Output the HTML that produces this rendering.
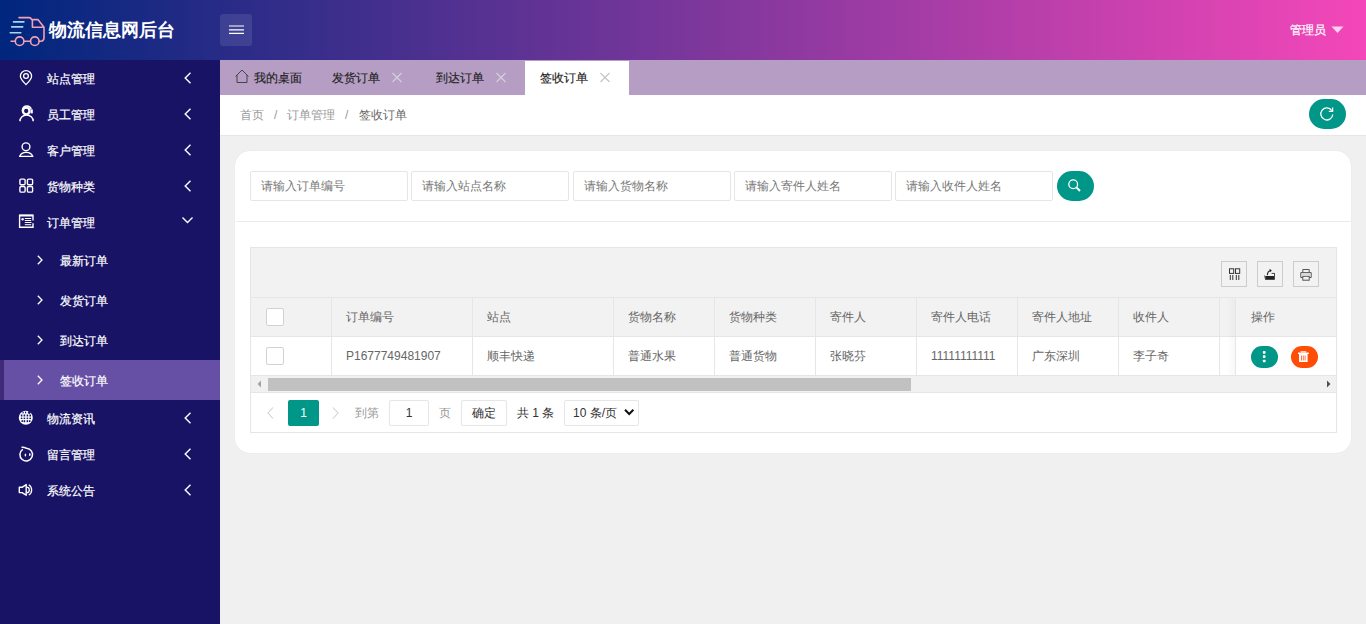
<!DOCTYPE html>
<html><head><meta charset="utf-8">
<style>
*{box-sizing:border-box;margin:0;padding:0}
html,body{width:1366px;height:624px;overflow:hidden;font-family:"Liberation Sans",sans-serif;font-size:12px;color:#666;background:#f0f0f0}
.abs{position:absolute}
#hdr{position:absolute;left:0;top:0;width:1366px;height:60px;background:linear-gradient(to right,#00267d,#f447b9)}
#title{position:absolute;left:49px;top:17px;font-size:18px;font-weight:bold;color:#fff;line-height:26px;white-space:nowrap}
#ham{position:absolute;left:220px;top:14px;width:32px;height:32px;border-radius:3px;background:rgba(255,255,255,.1)}
#admin{position:absolute;left:1290px;top:21px;color:#fff;line-height:18px;white-space:nowrap;-webkit-text-stroke:0.2px #fff}
#side{position:absolute;left:0;top:60px;width:220px;height:564px;background:#191366}
.it{position:absolute;left:0;width:220px;height:36px;line-height:36px;color:#fff}
.it .tx{position:absolute;left:47px;top:1px;-webkit-text-stroke:0.2px #fff}
.it svg{position:absolute}
.sub{height:40px;line-height:40px}
.sub .tx{left:60px}
.on{background:#6650a6}
.on:before{content:"";position:absolute;left:0;top:0;width:4px;height:40px;background:#3d2a78}
#tabs{position:absolute;left:220px;top:60px;width:1146px;height:35px;background:#b59dc4}
.tab{position:absolute;top:61px;height:35px;line-height:35px;color:#222;white-space:nowrap;-webkit-text-stroke:0.15px #222}
#crumb{position:absolute;left:220px;top:95px;width:1146px;height:41px;background:#fff;border-bottom:1px solid #e6e6e6}
#card{position:absolute;left:235px;top:151px;width:1116px;height:302px;background:#fff;border-radius:15px;box-shadow:0 0 1.5px rgba(0,0,0,.07)}
.inp{position:absolute;top:171px;width:158px;height:30px;border:1px solid #e6e6e6;border-radius:2px;background:#fff;color:#777;line-height:28px;padding-left:10px;white-space:nowrap}
.btn{position:absolute;background:#009688;border-radius:15px}
#tbl{position:absolute;left:250px;top:247px;width:1087px;height:186px;border:1px solid #e6e6e6;background:#fff}
.tool{position:absolute;top:261px;width:26px;height:26px;border:1px solid #ccc}
.th,.td{position:absolute;margin-top:1px;height:39px;line-height:39px;white-space:nowrap;color:#666}
.vl{position:absolute;width:1px;background:#e6e6e6}
.hl{position:absolute;height:1px;background:#e6e6e6}
.cb{position:absolute;width:18px;height:18px;border:1px solid #d2d2d2;border-radius:2px;background:#fff}
</style></head><body>
<div id="hdr"></div>
<svg class="abs" style="left:0;top:0" width="50" height="60" viewBox="0 0 50 60">
 <g fill="none" stroke-width="1.6" stroke-linecap="round" stroke-linejoin="round">
  <path d="M13.5 21.9H23.9M11.7 26.9H22.7M10.2 32.7H20.8" stroke="#a8d4ef"/>
  <path d="M19 17.6H29.4Q30.6 17.6 31.8 19.6H37.9L44 27.2V37.6Q44 41.2 40.9 41.2H39.1M30.5 41.2H23.9M15.3 41.2H11.1M32.4 19.6V27.2H44" stroke="#f4a0b4"/>
  <circle cx="19.6" cy="41.2" r="4.3" stroke="#f4a0b4"/>
  <circle cx="34.8" cy="41.2" r="4.3" stroke="#f4a0b4"/>
 </g>
</svg>
<div id="title">物流信息网后台</div>
<div id="ham"></div>
<svg class="abs" style="left:228px;top:24px" width="17" height="12" viewBox="0 0 17 12">
 <g stroke="#fff" stroke-width="1.2"><path d="M1 2H16M1 5.8H16M1 9.4H16"/></g>
</svg>
<div id="admin">管理员</div>
<svg class="abs" style="left:1331px;top:26px" width="13" height="8" viewBox="0 0 13 8"><path d="M0.5 0.5H12.5L6.5 7z" fill="rgba(255,255,255,.75)"/></svg>

<div id="side"></div>
<div class="it" style="top:60px"><svg class="abs" style="left:0;top:0" width="40" height="40" viewBox="0 0 40 40"><path d="M26 84.6Q20.4 79 20.4 76.2A5.6 5.6 0 0 1 31.6 76.2Q31.6 79 26 84.6Z" transform="translate(0,-60)" stroke="#fff" fill="none" stroke-width="1.3"/><circle cx="26" cy="16" r="2.4" stroke="#fff" fill="none" stroke-width="1.3"/></svg><svg class="abs" style="left:170px;top:0" width="40" height="36" viewBox="0 0 40 36"><path d="M20.5 12.8L15.2 18L20.5 23.2" stroke="#fff" fill="none" stroke-width="1.4"/></svg><span class="tx">站点管理</span></div>
<div class="it" style="top:96px"><svg class="abs" style="left:0;top:0" width="40" height="40" viewBox="0 0 40 40"><circle cx="26.2" cy="15" r="3.3" stroke="#fff" fill="none" stroke-width="2.3"/><path d="M22.5 15.5V13.5A4.5 4.5 0 0 1 31.2 13.2" stroke="#fff" fill="none" stroke-width="1.4"/><rect x="30.6" y="13.4" width="2.2" height="4" fill="#fff"/><path d="M20 25.2A6.6 6.2 0 0 1 33.2 25.2" stroke="#fff" fill="none" stroke-width="1.5"/></svg><svg class="abs" style="left:170px;top:0" width="40" height="36" viewBox="0 0 40 36"><path d="M20.5 12.8L15.2 18L20.5 23.2" stroke="#fff" fill="none" stroke-width="1.4"/></svg><span class="tx">员工管理</span></div>
<div class="it" style="top:132px"><svg class="abs" style="left:0;top:0" width="40" height="40" viewBox="0 0 40 40"><circle cx="26" cy="14.8" r="3.9" stroke="#fff" fill="none" stroke-width="1.4"/><path d="M19.6 24.4A7 6 0 0 1 32.8 24.4Z" stroke="#fff" fill="none" stroke-width="1.4" stroke-linejoin="round"/></svg><svg class="abs" style="left:170px;top:0" width="40" height="36" viewBox="0 0 40 36"><path d="M20.5 12.8L15.2 18L20.5 23.2" stroke="#fff" fill="none" stroke-width="1.4"/></svg><span class="tx">客户管理</span></div>
<div class="it" style="top:168px"><svg class="abs" style="left:0;top:0" width="40" height="40" viewBox="0 0 40 40"><g stroke="#fff" fill="none" stroke-width="1.4"><rect x="19.9" y="11.1" width="5.2" height="5.6" rx="1.2"/><rect x="27.4" y="11.1" width="5.2" height="5.6" rx="1.2"/><rect x="19.9" y="18.5" width="5.2" height="5.6" rx="1.2"/><rect x="27.4" y="18.5" width="5.2" height="5.6" rx="1.2"/></g></svg><svg class="abs" style="left:170px;top:0" width="40" height="36" viewBox="0 0 40 36"><path d="M20.5 12.8L15.2 18L20.5 23.2" stroke="#fff" fill="none" stroke-width="1.4"/></svg><span class="tx">货物种类</span></div>
<div class="it" style="top:204px"><svg class="abs" style="left:0;top:0" width="40" height="40" viewBox="0 0 40 40"><path d="M33 16.5V11.2H19.6V23.3H33V19.2" stroke="#fff" fill="none" stroke-width="1.4"/><path d="M19.6 11.6H33" stroke="#fff" stroke-width="1.8"/><circle cx="22.6" cy="15.2" r="1.2" fill="#fff"/><g stroke="#fff" stroke-width="1"><path d="M24.8 14.5H31.2M24.8 16.5H31.2M24.8 18.5H31.5M24.8 20.7H31.2"/></g></svg><svg class="abs" style="left:170px;top:0" width="40" height="36" viewBox="0 0 40 36"><path d="M12.5 13.6L17.5 18.6L22.5 13.6" stroke="#fff" fill="none" stroke-width="1.4"/></svg><span class="tx">订单管理</span></div>
<div class="it sub" style="top:240px"><svg class="abs" style="left:0;top:0" width="50" height="40" viewBox="0 0 50 40"><path d="M37.8 15.8L42 20L37.8 24.2" stroke="#fff" fill="none" stroke-width="1.3"/></svg><span class="tx">最新订单</span></div>
<div class="it sub" style="top:280px"><svg class="abs" style="left:0;top:0" width="50" height="40" viewBox="0 0 50 40"><path d="M37.8 15.8L42 20L37.8 24.2" stroke="#fff" fill="none" stroke-width="1.3"/></svg><span class="tx">发货订单</span></div>
<div class="it sub" style="top:320px"><svg class="abs" style="left:0;top:0" width="50" height="40" viewBox="0 0 50 40"><path d="M37.8 15.8L42 20L37.8 24.2" stroke="#fff" fill="none" stroke-width="1.3"/></svg><span class="tx">到达订单</span></div>
<div class="it sub on" style="top:360px"><svg class="abs" style="left:0;top:0" width="50" height="40" viewBox="0 0 50 40"><path d="M37.8 15.8L42 20L37.8 24.2" stroke="#fff" fill="none" stroke-width="1.3"/></svg><span class="tx">签收订单</span></div>
<div class="it" style="top:400px"><svg class="abs" style="left:0;top:0" width="40" height="36" viewBox="0 0 40 36"><circle cx="25.8" cy="17.8" r="7" fill="#fff"/><g fill="#191366"><rect x="20.8" y="14.5" width="1.6" height="2"/><rect x="23.6" y="14.5" width="1.6" height="2"/><rect x="26.6" y="14.5" width="1.6" height="2"/><rect x="29.4" y="14.5" width="1.6" height="2"/><rect x="20.8" y="17.6" width="1.6" height="1.5"/><rect x="23.6" y="17.6" width="1.6" height="1.5"/><rect x="26.6" y="17.6" width="1.6" height="1.5"/><rect x="29.4" y="17.6" width="1.6" height="1.5"/><rect x="21.5" y="20.2" width="1.4" height="1.8"/><rect x="23.6" y="20.2" width="1.6" height="2"/><rect x="26.6" y="20.2" width="1.6" height="2"/><rect x="29" y="20.2" width="1.4" height="1.8"/><rect x="22.5" y="11.8" width="1.2" height="1.6"/><rect x="25" y="11.6" width="1.2" height="1.8"/><circle cx="29.3" cy="12.5" r="1.4"/></g></svg><svg class="abs" style="left:170px;top:0" width="40" height="36" viewBox="0 0 40 36"><path d="M20.5 12.8L15.2 18L20.5 23.2" stroke="#fff" fill="none" stroke-width="1.4"/></svg><span class="tx">物流资讯</span></div>
<div class="it" style="top:436px"><svg class="abs" style="left:0;top:0" width="40" height="36" viewBox="0 0 40 36"><path d="M21.5 11.3Q24 11 26.5 12.3A6.3 6.3 0 1 1 22.8 13.3" stroke="#fff" fill="none" stroke-width="1.5"/><ellipse cx="25.4" cy="19.1" rx="0.8" ry="1.5" fill="#fff"/><ellipse cx="29.8" cy="18.5" rx="0.8" ry="1.5" fill="#fff"/></svg><svg class="abs" style="left:170px;top:0" width="40" height="36" viewBox="0 0 40 36"><path d="M20.5 12.8L15.2 18L20.5 23.2" stroke="#fff" fill="none" stroke-width="1.4"/></svg><span class="tx">留言管理</span></div>
<div class="it" style="top:472px"><svg class="abs" style="left:0;top:0" width="40" height="36" viewBox="0 0 40 36"><path d="M19.3 15.3H22L26.2 12.6V23.2L22 20.6H19.3Z" stroke="#fff" fill="none" stroke-width="1.4" stroke-linejoin="round"/><path d="M26.5 15.2A2.8 2.8 0 0 1 26.5 20.8" stroke="#fff" fill="none" stroke-width="1.3"/><path d="M28.8 12.8A6 6 0 0 1 28.8 23" stroke="#fff" fill="none" stroke-width="1.3"/></svg><svg class="abs" style="left:170px;top:0" width="40" height="36" viewBox="0 0 40 36"><path d="M20.5 12.8L15.2 18L20.5 23.2" stroke="#fff" fill="none" stroke-width="1.4"/></svg><span class="tx">系统公告</span></div>
<div id="tabs"></div>
<svg class="abs" style="left:233px;top:68px" width="18" height="16" viewBox="0 0 18 16"><path d="M2.5 8.5L9 2L15.5 8.5M4 7V14.5H14V7" fill="none" stroke="#444" stroke-width="1"/></svg>
<div class="tab" style="left:254px">我的桌面</div>
<div class="tab" style="left:332px">发货订单</div>
<svg class="abs" style="left:390px;top:71px" width="14" height="14" viewBox="0 0 14 14"><path d="M2.5 2L11.5 11M11.5 2L2.5 11" stroke="#d8d0dc" stroke-width="1.1"/></svg>
<div class="tab" style="left:436px">到达订单</div>
<svg class="abs" style="left:494px;top:71px" width="14" height="14" viewBox="0 0 14 14"><path d="M2.5 2L11.5 11M11.5 2L2.5 11" stroke="#d8d0dc" stroke-width="1.1"/></svg>
<div class="abs" style="left:525px;top:61px;width:104px;height:35px;background:#fff"></div>
<div class="tab" style="left:540px">签收订单</div>
<svg class="abs" style="left:598px;top:71px" width="14" height="14" viewBox="0 0 14 14"><path d="M2.5 2L11.5 11M11.5 2L2.5 11" stroke="#c4c4c4" stroke-width="1.1"/></svg>

<div id="crumb"></div>
<div class="abs" style="left:240px;top:105px;line-height:20px;white-space:nowrap;color:#999">首页</div>
<div class="abs" style="left:274px;top:105px;line-height:20px;color:#999">/</div>
<div class="abs" style="left:287px;top:105px;line-height:20px;white-space:nowrap;color:#999">订单管理</div>
<div class="abs" style="left:345px;top:105px;line-height:20px;color:#999">/</div>
<div class="abs" style="left:359px;top:105px;line-height:20px;white-space:nowrap;color:#666">签收订单</div>
<div class="btn" style="left:1309px;top:99px;width:37px;height:30px"></div>
<svg class="abs" style="left:1317px;top:104px" width="20" height="20" viewBox="0 0 20 20"><path d="M14.8 6.6A6 6 0 1 0 15.8 10.5" fill="none" stroke="#fff" stroke-width="1.3"/><path d="M15.6 3.6V7.4H11.8" fill="none" stroke="#fff" stroke-width="1.3"/></svg>

<div id="card"></div>
<div class="abs" style="left:236px;top:221px;width:1115px;height:1px;background:#ebebeb"></div>
<div class="inp" style="left:250px">请输入订单编号</div>
<div class="inp" style="left:411px">请输入站点名称</div>
<div class="inp" style="left:573px">请输入货物名称</div>
<div class="inp" style="left:734px">请输入寄件人姓名</div>
<div class="inp" style="left:895px">请输入收件人姓名</div>
<div class="btn" style="left:1057px;top:171px;width:37px;height:30px"></div>
<svg class="abs" style="left:1065px;top:176px" width="20" height="20" viewBox="0 0 20 20"><circle cx="8.2" cy="8.2" r="4.4" fill="none" stroke="#fff" stroke-width="1.3"/><path d="M11.4 11.4L15 15" stroke="#fff" stroke-width="2"/></svg>
<div id="tbl"></div>
<div class="abs" style="left:251px;top:248px;width:1085px;height:49px;background:#f2f2f2"></div>
<div class="tool" style="left:1221px"></div>
<div class="tool" style="left:1257px"></div>
<div class="tool" style="left:1293px"></div>
<svg class="abs" style="left:1221px;top:261px" width="26" height="26" viewBox="0 0 26 26"><g fill="none" stroke="#333" stroke-width="1"><rect x="8.5" y="7.8" width="4.2" height="4.6"/><rect x="14.5" y="7.8" width="4.2" height="4.6"/><path d="M9.3 14V19M11.8 14V19M15.3 14V19M17.8 14V19"/></g></svg>
<svg class="abs" style="left:1257px;top:261px" width="26" height="26" viewBox="0 0 26 26"><path d="M8.3 15H17.8V18.8H8.3Z" fill="#222"/><path d="M7.7 14.5L8.5 18.5M17.5 12.2V15.5M14.6 12.4H17.5" fill="none" stroke="#444" stroke-width="1"/><path d="M10.3 14.3Q10.5 10.5 13.2 9.6" fill="none" stroke="#333" stroke-width="1.1"/><path d="M12.6 7.8L14.8 9.4L13 11.2Z" fill="#222"/></svg>
<svg class="abs" style="left:1293px;top:261px" width="26" height="26" viewBox="0 0 26 26"><g fill="none" stroke="#555" stroke-width="1"><path d="M9.8 11.2V8.5H16.2V11.2"/><path d="M9.8 16.5H7.8V11.6H18.2V16.5H16.2"/><rect x="9.8" y="15.3" width="6.4" height="3.9"/></g><path d="M8.5 13.2H17.5" stroke="#ccc" stroke-width="1"/></svg>
<div class="abs" style="left:251px;top:297px;width:1085px;height:40px;background:#f2f2f2"></div>
<div class="hl" style="left:251px;top:297px;width:1085px"></div>
<div class="hl" style="left:251px;top:336px;width:1085px"></div>
<div class="hl" style="left:251px;top:375px;width:1085px"></div>
<div class="vl" style="left:331px;top:298px;height:77px"></div>
<div class="th" style="left:346px;top:297px">订单编号</div>
<div class="td" style="left:346px;top:336px">P1677749481907</div>
<div class="vl" style="left:472px;top:298px;height:77px"></div>
<div class="th" style="left:487px;top:297px">站点</div>
<div class="td" style="left:487px;top:336px">顺丰快递</div>
<div class="vl" style="left:613px;top:298px;height:77px"></div>
<div class="th" style="left:628px;top:297px">货物名称</div>
<div class="td" style="left:628px;top:336px">普通水果</div>
<div class="vl" style="left:714px;top:298px;height:77px"></div>
<div class="th" style="left:729px;top:297px">货物种类</div>
<div class="td" style="left:729px;top:336px">普通货物</div>
<div class="vl" style="left:815px;top:298px;height:77px"></div>
<div class="th" style="left:830px;top:297px">寄件人</div>
<div class="td" style="left:830px;top:336px">张晓芬</div>
<div class="vl" style="left:916px;top:298px;height:77px"></div>
<div class="th" style="left:931px;top:297px">寄件人电话</div>
<div class="td" style="left:931px;top:336px">11111111111</div>
<div class="vl" style="left:1017px;top:298px;height:77px"></div>
<div class="th" style="left:1032px;top:297px">寄件人地址</div>
<div class="td" style="left:1032px;top:336px">广东深圳</div>
<div class="vl" style="left:1118px;top:298px;height:77px"></div>
<div class="th" style="left:1133px;top:297px">收件人</div>
<div class="td" style="left:1133px;top:336px">李子奇</div>
<div class="vl" style="left:1219px;top:298px;height:77px"></div>
<div class="cb" style="left:266px;top:308px"></div>
<div class="cb" style="left:266px;top:347px"></div>
<div class="abs" style="left:1226px;top:298px;width:10px;height:77px;background:linear-gradient(to right,rgba(0,0,0,0),rgba(0,0,0,.03))"></div><div class="abs" style="left:1236px;top:297px;width:100px;height:78px;background:#fff"></div>
<div class="abs" style="left:1236px;top:297px;width:100px;height:40px;background:#f2f2f2;border-top:1px solid #e6e6e6;border-bottom:1px solid #e6e6e6"></div>
<div class="vl" style="left:1235px;top:298px;height:77px"></div>
<div class="hl" style="left:1236px;top:375px;width:100px"></div>
<div class="th" style="left:1251px;top:297px">操作</div>
<div class="abs" style="left:1251px;top:346px;width:27px;height:22px;border-radius:11px;background:#009688"></div>
<svg class="abs" style="left:1251px;top:346px" width="27" height="22" viewBox="0 0 27 22"><g fill="#fff"><rect x="11.9" y="5.1" width="2.6" height="2.6" rx="0.6"/><rect x="11.9" y="9.3" width="2.6" height="2.6" rx="0.6"/><rect x="11.9" y="13.7" width="2.6" height="2.6" rx="0.6"/></g></svg>
<div class="abs" style="left:1291px;top:346px;width:27px;height:22px;border-radius:11px;background:#ff4d05"></div>
<svg class="abs" style="left:1291px;top:346px" width="27" height="22" viewBox="0 0 27 22"><path d="M7 7.3H17.8" stroke="#fff" stroke-width="1.5"/><path d="M10.2 6.6V5.8H14.6V6.6" stroke="#fff" stroke-width="1.2" fill="none"/><path d="M8 8H16.6V16H8Z" fill="#fff"/><path d="M10.5 9.5V14.5M12.3 9.5V14.5M14.1 9.5V14.5" stroke="#ff6a30" stroke-width="0.9"/></svg>
<div class="abs" style="left:251px;top:376px;width:1085px;height:16px;background:#f1f1f1"></div>
<div class="abs" style="left:268px;top:378px;width:643px;height:13px;background:#c1c1c1"></div>
<svg class="abs" style="left:251px;top:376px" width="17" height="16" viewBox="0 0 17 16"><path d="M10 4.5V11.5L6.5 8Z" fill="#a3a3a3"/></svg>
<svg class="abs" style="left:1319px;top:376px" width="17" height="16" viewBox="0 0 17 16"><path d="M8 4.5V11.5L11.5 8Z" fill="#505050"/></svg>
<div class="hl" style="left:251px;top:392px;width:1085px"></div>
<svg class="abs" style="left:262px;top:404px" width="16" height="18" viewBox="0 0 16 18"><path d="M11 3.5L6 9L11 14.5" fill="none" stroke="#d2d2d2" stroke-width="1.1"/></svg>
<div class="abs" style="left:288px;top:400px;width:31px;height:26px;border-radius:2px;background:#009688;color:#fff;text-align:center;line-height:26px">1</div>
<svg class="abs" style="left:328px;top:404px" width="16" height="18" viewBox="0 0 16 18"><path d="M5 3.5L10 9L5 14.5" fill="none" stroke="#d2d2d2" stroke-width="1.1"/></svg>
<div class="abs" style="left:355px;top:400px;line-height:26px;color:#999;white-space:nowrap">到第</div>
<div class="abs" style="left:389px;top:400px;width:40px;height:26px;border:1px solid #e6e6e6;border-radius:2px;text-align:center;line-height:24px;color:#333">1</div>
<div class="abs" style="left:439px;top:400px;line-height:26px;color:#999">页</div>
<div class="abs" style="left:461px;top:400px;width:46px;height:26px;border:1px solid #e6e6e6;border-radius:2px;text-align:center;line-height:24px;color:#333">确定</div>
<div class="abs" style="left:517px;top:400px;line-height:26px;color:#333;white-space:nowrap">共 1 条</div>
<div class="abs" style="left:564px;top:400px;width:75px;height:26px;border:1px solid #e6e6e6;border-radius:2px;line-height:24px;color:#333;padding-left:8px;white-space:nowrap">10 条/页</div>
<svg class="abs" style="left:623px;top:406px" width="12" height="12" viewBox="0 0 12 12"><path d="M2 3.8L6.2 8L10.4 3.8" fill="none" stroke="#111" stroke-width="2"/></svg>
</body></html>
